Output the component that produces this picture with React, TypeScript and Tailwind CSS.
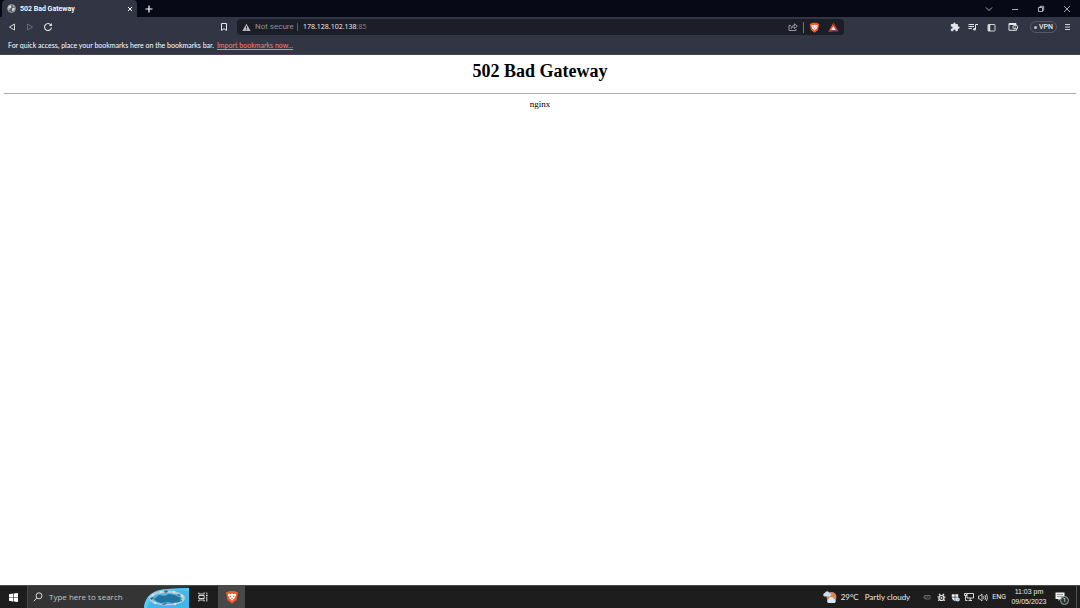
import type { ReactNode } from 'react'

function IconButton({ label, className = '', children }: { label: string; className?: string; children: ReactNode }) {
  return (
    <button type="button" aria-label={label} className={`flex shrink-0 items-center justify-center ${className}`}>
      {children}
    </button>
  )
}

function BraveLogo({ size }: { size: number }) {
  return (
    <svg width={size} height={size} viewBox="0 0 16 16">
      <path d="M4.5 1h7l1 1.2 1.6-.2.9 2-.6 1.2-1.2 6.3L8 15.6l-5.2-4.1L1.6 5.2 1 4l.9-2 1.6.2z" fill="#ee5a2c" />
      <path d="M4 4.2l2.200.4L8 4l1.800.6 2.200-.4.8 1.800-1.600 2.200.2 1.300L9.200 10.800 8 12.500l-1.200-1.700-2.200-1.300.2-1.300L3.200 6z" fill="#fff" />
      <path d="M4.500 6.200l2.700.6-1 1.600zM11.500 6.200l-2.700.6 1 1.600zM6.800 9.500h2.400L8 10.800z" fill="#ee5a2c" />
    </svg>
  )
}

function TabStrip() {
  return (
    <div className="flex h-[17px] items-stretch bg-[#080916] text-white">
      <div className="ml-[2px] flex w-[135px] items-center rounded-t-sm bg-[#323544] pl-[5px] pr-[3px]">
        <svg width="9" height="9" viewBox="0 0 16 16">
          <circle cx="8" cy="8" r="7" fill="#5c5f6a" stroke="#a9abb3" strokeWidth="1.5" />
          <path d="M2 5l4-3 2 2-1 3-3 1 1 2-2 1zM9 8l4-2 1 3-3 4-2-1zM10 2l3 2-2 1z" fill="#d7d8dc" />
        </svg>
        <span className="ml-1 flex-1 text-[7px] font-semibold leading-[10px]">502 Bad Gateway</span>
        <IconButton label="Close tab" className="size-2">
          <svg width="6" height="6" viewBox="0 0 6 6" stroke="currentColor" strokeWidth="1">
            <path d="M1 1l4 4M5 1L1 5" />
          </svg>
        </IconButton>
      </div>
      <IconButton label="New tab" className="w-6">
        <svg width="8" height="8" viewBox="0 0 8 8" stroke="currentColor" strokeWidth="1.2">
          <path d="M4 .5v7M.5 4h7" />
        </svg>
      </IconButton>
      <div className="ml-auto flex text-[#d6d7dc]">
        <IconButton label="Search tabs" className="w-[26px]">
          <svg width="8" height="8" viewBox="0 0 8 8" fill="none" stroke="currentColor" strokeWidth=".8">
            <path d="M1 2.500l3 3 3-3" />
          </svg>
        </IconButton>
        <IconButton label="Minimize" className="w-[26px]">
          <svg width="8" height="8" viewBox="0 0 8 8" stroke="currentColor" strokeWidth=".8">
            <path d="M1 4.500h6" />
          </svg>
        </IconButton>
        <IconButton label="Restore" className="w-[26px]">
          <svg width="8" height="8" viewBox="0 0 8 8" fill="none" stroke="currentColor" strokeWidth=".8">
            <path d="M1.500 2.500h4v4h-4zM3 2.500v-1.200h3.700v4H5.500" />
          </svg>
        </IconButton>
        <IconButton label="Close window" className="w-[26px]">
          <svg width="8" height="8" viewBox="0 0 8 8" stroke="currentColor" strokeWidth=".8">
            <path d="M1 1l6 6M7 1L1 7" />
          </svg>
        </IconButton>
      </div>
    </div>
  )
}

function Toolbar() {
  return (
    <div className="flex h-5 items-center text-[#e4e5e9]">
      <div className="ml-1 flex gap-[2px]">
        <IconButton label="Back" className="size-4">
          <svg width="8" height="8" viewBox="0 0 8 8" fill="none" stroke="currentColor" strokeWidth=".9">
            <path d="M6.500 1v6L1.500 4z" />
          </svg>
        </IconButton>
        <IconButton label="Forward" className="size-4 text-[#737683]">
          <svg width="8" height="8" viewBox="0 0 8 8" fill="none" stroke="currentColor" strokeWidth=".8">
            <path d="M1.500 1v6l5-3z" />
          </svg>
        </IconButton>
        <IconButton label="Reload" className="size-4">
          <svg width="10" height="10" viewBox="0 0 10 10" fill="none" stroke="currentColor" strokeWidth="1.100">
            <path d="M8.500 5.500A3.500 3.500 0 1 1 7.800 2.800" />
            <path d="M8.900 1v3H5.900z" fill="currentColor" stroke="none" />
          </svg>
        </IconButton>
      </div>

      <div className="ml-[160px] flex flex-1 items-center">
        <IconButton label="Bookmark this tab" className="size-4">
          <svg width="8" height="10" viewBox="0 0 8 10" fill="none" stroke="currentColor" strokeWidth="1">
            <path d="M1.500 1.500h5v7L4 6.700 1.500 8.500z" />
          </svg>
        </IconButton>
        <div className="ml-[5px] flex h-4 flex-1 items-center rounded-sm bg-[#1b1e26] pl-[5px] pr-[3px]">
          <svg width="9" height="9" viewBox="0 0 10 10">
            <path d="M5 .8L9.600 9H.4z" fill="#b8bac0" />
            <path d="M5 3.500v2.700M5 7v1" stroke="#1b1e26" strokeWidth="1" />
          </svg>
          <label htmlFor="address" className="ml-1 w-[42px] whitespace-nowrap text-[8px] leading-[10px] text-[#8f9299]">
            Not secure
          </label>
          <span className="h-2 w-px bg-[#5b5e68]" />
          <div className="ml-[5px] flex flex-1 items-center font-['Open_Sans',sans-serif] text-[7px] leading-[10px]">
            <input
              id="address"
              type="text"
              defaultValue="178.128.102.138"
              className="field-sizing-content font-medium text-[#f1f1f4] outline-none"
            />
            <span className="text-[#858891]">:85</span>
          </div>
          <IconButton label="Share this page" className="size-4 text-[#a4a6ae]">
            <svg width="10" height="10" viewBox="0 0 10 10" fill="none" stroke="currentColor" strokeWidth=".9">
              <path d="M3 3.500H1v5h7V7M3 6.500c.2-2 1.500-3 3.500-3V1.800L9.300 4.200 6.500 6.500V5C5 5 4 5.500 3 6.500z" />
            </svg>
          </IconButton>
          <span className="mx-[2px] h-[11px] w-px bg-[#70737c]" />
          <IconButton label="Brave Shields" className="size-4">
            <BraveLogo size={11} />
          </IconButton>
          <IconButton label="Brave Rewards" className="ml-[3px] size-4">
            <svg width="11" height="10" viewBox="0 0 11 10">
              <path d="M5.500.5L.5 9.500h3l2-4z" fill="#ee5a2c" />
              <path d="M5.500.5l5 9-3-1-2-3z" fill="#c23a33" />
              <path d="M5.500 4l2.600 4.500H2.900z" fill="#e9e4ef" />
              <path d="M.5 9.500h10L9.500 8h-8z" fill="#87415b" />
            </svg>
          </IconButton>
        </div>
      </div>

      <div className="ml-[102px] mr-[5px] flex items-center">
        <IconButton label="Extensions" className="size-[18px]">
          <svg width="10" height="10" viewBox="0 0 24 24" fill="currentColor">
            <path d="M20.500 11H19V7a2 2 0 0 0-2-2h-4V3.500a2.500 2.500 0 0 0-5 0V5H4a2 2 0 0 0-2 2v3.800h1.500a2.700 2.700 0 0 1 0 5.400H2V20a2 2 0 0 0 2 2h3.800v-1.500a2.700 2.700 0 0 1 5.400 0V22H17a2 2 0 0 0 2-2v-4h1.500a2.500 2.500 0 0 0 0-5z" />
          </svg>
        </IconButton>
        <IconButton label="Media controls" className="size-[18px]">
          <svg width="10" height="10" viewBox="0 0 10 10" fill="none" stroke="currentColor" strokeWidth="1">
            <path d="M.5 2.500h5.500M.5 4.500h5.500M.5 6.500h3.500M7.500 7V2.500H10" />
            <circle cx="6.500" cy="7.300" r="1.300" fill="currentColor" stroke="none" />
          </svg>
        </IconButton>
        <IconButton label="Sidebar" className="size-[18px]">
          <svg width="9" height="9" viewBox="0 0 9 9" fill="none" stroke="currentColor" strokeWidth=".9">
            <rect x="1" y="1.500" width="7" height="6.500" rx=".6" />
            <path d="M2.200 1.500v6.500" strokeWidth="2" />
          </svg>
        </IconButton>
        <IconButton label="Wallet" className="ml-1 size-[18px]">
          <svg width="10" height="10" viewBox="0 0 10 10" fill="none" stroke="currentColor" strokeWidth="1">
            <path d="M8 3V1.500H1v6.800h7.500V7" />
            <path d="M1 2.500h7" />
            <rect x="5" y="3.700" width="4.500" height="3" rx=".6" />
            <path d="M6.700 5.200h1" />
          </svg>
        </IconButton>
        <button
          type="button"
          className="ml-2 flex h-3 w-[27px] items-center justify-center gap-[2px] rounded-full border border-[#555866] text-[7px] font-medium leading-[8px]"
        >
          <span className="size-[3px] rounded-full bg-[#bfc1c8]" />
          VPN
        </button>
        <IconButton label="Menu" className="ml-[2px] size-4">
          <svg width="7" height="8" viewBox="0 0 7 8" stroke="currentColor" strokeWidth=".9">
            <path d="M1 1.500h5M1 4h5M1 6.500h5" />
          </svg>
        </IconButton>
      </div>
    </div>
  )
}

function BookmarksBar() {
  return (
    <div className="flex h-[18px] items-start gap-[3px] whitespace-nowrap border-b border-[#464654] pl-2 pt-[3px] font-['Lato',sans-serif] text-[7px] leading-[10px] text-white">
      <span>For quick access, place your bookmarks here on the bookmarks bar.</span>
      <a href="#import" className="text-[#f08868] underline">
        Import bookmarks now...
      </a>
    </div>
  )
}

function SearchIllustration() {
  return (
    <svg className="h-full w-[45px] shrink-0" viewBox="0 0 45 22">
      <path d="M0 22C1 9 10 4 23 3l22-1v20z" fill="#42b6e9" />
      <path d="M0 22C1 9 10 4 23 3l22-1v3C26 2 5 8 3 22z" fill="#5cc9ef" />
      <ellipse cx="23" cy="12" rx="18" ry="7.500" fill="#a9cfe0" />
      <ellipse cx="23" cy="12.500" rx="15" ry="5.500" fill="#52b4e2" />
      <path d="M10 13l5-4 6 1 4-2 6 1 6 3-2 4-6 1-5-1-7 1-5-2z" fill="#23759f" />
      <g fill="#f1d6c1">
        <circle cx="9" cy="9" r="1.300" />
        <circle cx="17" cy="6" r="1.300" />
        <circle cx="30" cy="6" r="1.300" />
        <circle cx="38" cy="10" r="1.300" />
        <circle cx="31" cy="18" r="1.300" />
        <circle cx="11" cy="17" r="1.300" />
      </g>
      <g fill="#4d6a7c">
        <path d="M6 12l3-1 1 1-3 2zM20 5l3-1 1 2-3 1zM34 8l3 1-1 1-3-1zM35 15l3-1v1l-3 1zM18 18l4-1 1 1-4 1z" />
      </g>
    </svg>
  )
}

function Taskbar() {
  return (
    <div className="flex h-[23px] items-stretch border-t border-[#4b4b4b] bg-[#1d1d1d] text-[#ececec]">
      <IconButton label="Start" className="w-[27px]">
        <svg width="9" height="9" viewBox="0 0 9 9" fill="#fff">
          <path d="M0 1.200L4 .6v3.600H0zM4.600.5L9 0v4.200H4.600zM0 4.800h4v3.600l-4-.6zM4.600 4.800H9V9l-4.400-.5z" />
        </svg>
      </IconButton>
      <label className="flex w-[162px] items-center border-l border-[#484848] bg-[#343434] pl-[5px]">
        <svg width="10" height="10" viewBox="0 0 10 10" fill="none" stroke="currentColor" strokeWidth=".9">
          <circle cx="6" cy="3.800" r="3" />
          <path d="M3.800 6L.8 9.200" />
        </svg>
        <input
          type="text"
          aria-label="Search"
          placeholder="Type here to search"
          className="ml-[6px] w-0 flex-1 bg-transparent font-['Open_Sans',sans-serif] text-[8px] leading-[10px] outline-none placeholder:text-[#c4c4c4]"
        />
        <SearchIllustration />
      </label>
      <IconButton label="Task view" className="w-[29px] pr-[2px]">
        <svg width="10" height="10" viewBox="0 0 10 10" fill="none" stroke="currentColor" strokeWidth=".9">
          <path d="M.8.500v1.500h5.400V.500M.8 9.500V8h5.400v1.500M.8 3.500h5.400v3H.8zM8.800.500v1.500M8.800 5v4.500" />
          <path d="M8 3.500h1.600" strokeWidth="1.600" />
        </svg>
      </IconButton>
      <IconButton label="Brave" className="w-[27px] bg-[#484848]">
        <BraveLogo size={14} />
      </IconButton>

      <div className="ml-auto flex items-center text-[8px] leading-[10px]">
        <button type="button" className="flex items-center whitespace-nowrap font-['Lato',sans-serif]">
          <svg width="14" height="14" viewBox="0 0 14 14">
            <circle cx="8.500" cy="7" r="5" fill="#dd8656" />
            <path d="M1.500 6.500a1.800 1.800 0 0 1 .3-3.500A2.500 2.500 0 0 1 6.500 3a1.800 1.800 0 0 1 .5 3.500z" fill="#c9dcf0" />
            <path d="M5.500 13a2 2 0 0 1 .3-3.900 2.600 2.600 0 0 1 5-.3A2.200 2.200 0 0 1 11.500 13z" fill="#d9e8f7" />
          </svg>
          <span className="ml-1">29°C</span>
          <span className="ml-[6px]">Partly cloudy</span>
        </button>
        <div className="ml-3 flex items-center gap-1">
          <IconButton label="Meet now" className="size-[10px] text-[#777]">
            <svg width="8" height="6" viewBox="0 0 8 6" fill="none" stroke="currentColor" strokeWidth=".8">
              <path d="M2 1.500h5v3.500H2zM.5 3l2-1.500M.5 3L2.500 5M3.500 3h2" />
            </svg>
          </IconButton>
          <IconButton label="Bug monitor" className="size-[10px]">
            <svg width="9" height="9" viewBox="0 0 9 9" fill="none" stroke="currentColor" strokeWidth="1.200">
              <circle cx="4.500" cy="5" r="2.500" />
              <path d="M2 1l1.500 1.500M7 1L5.500 2.500M.5 4H2M7 4h1.500M1 7.500l1.500-.8M8 7.500l-1.500-.8" />
              <circle cx="4.500" cy="5" r="1" fill="currentColor" stroke="none" />
            </svg>
          </IconButton>
          <IconButton label="Windows Security" className="size-[10px]">
            <svg width="9" height="9" viewBox="0 0 9 9">
              <path d="M.8 1.200h6.400v2.600c0 2.300-1.300 3.600-3.200 4.400C2 7.400.8 6 .8 3.800z" fill="#f1f1f1" />
              <path d="M4 1v7M.8 4.200h6.400" stroke="#343434" strokeWidth=".7" />
              <circle cx="6.700" cy="6.500" r="2" fill="#d6e8fa" />
              <path d="M5.800 6.500l.7.7 1.200-1.300" stroke="#2470b5" strokeWidth=".6" fill="none" />
            </svg>
          </IconButton>
          <IconButton label="Network" className="size-[10px]">
            <svg width="10" height="10" viewBox="0 0 10 10" fill="none" stroke="currentColor" strokeWidth=".9">
              <path d="M3 1.500h6.500v4.500H3zM6.200 6v2.500M4.500 8.500h3.500M.5 1.500h2v2h-2zM1.500 3.500v5h2" />
            </svg>
          </IconButton>
          <IconButton label="Volume" className="size-[10px]">
            <svg width="10" height="9" viewBox="0 0 10 9" fill="none" stroke="currentColor" strokeWidth=".8">
              <path d="M.5 3h1.300L4 1v7L1.800 6H.5zM5.500 3q1 1.500 0 3M7 2q1.600 2.500 0 5M8.500 1q2 3.500 0 7" />
            </svg>
          </IconButton>
        </div>
        <button type="button" className="ml-1 text-[7px]">
          ENG
        </button>
        <button
          type="button"
          className="ml-[5px] w-9 whitespace-nowrap text-center font-['Liberation_Sans',sans-serif] text-[7px]"
        >
          11:03 pm
          <br />
          09/05/2023
        </button>
        <button type="button" aria-label="1 new notification" className="relative ml-2 mr-2 size-[13px]">
          <svg width="11" height="10" viewBox="0 0 11 10">
            <path d="M.5.500h9v6.500H5L3.500 9V7h-3z" fill="#f1f1f1" />
            <path d="M2 2.500h6M2 4.500h6" stroke="#777" strokeWidth=".7" />
          </svg>
          <span className="absolute -bottom-px -right-px flex size-[9px] items-center justify-center rounded-full border border-[#a5a5a5] bg-[#303030] text-[6px] leading-[6px]">
            1
          </span>
        </button>
        <span className="h-full w-px bg-[#505050]" />
        <span className="w-[3px]" />
      </div>
    </div>
  )
}

export default function App() {
  return (
    <div className="flex min-h-screen flex-col bg-white font-['Roboto','Noto_Sans',sans-serif]">
      <header className="bg-[#323544]">
        <TabStrip />
        <Toolbar />
        <BookmarksBar />
      </header>

      <main className="flex-1 px-1 text-center font-['Liberation_Serif',serif] text-black">
        <h1 className="pt-[5px] text-[18px] font-bold leading-[22px]">502 Bad Gateway</h1>
        <hr className="mt-[11px] border-[#ababab]" />
        <p className="mt-1 text-[9px] leading-[12px]">nginx</p>
      </main>

      <Taskbar />
    </div>
  )
}
